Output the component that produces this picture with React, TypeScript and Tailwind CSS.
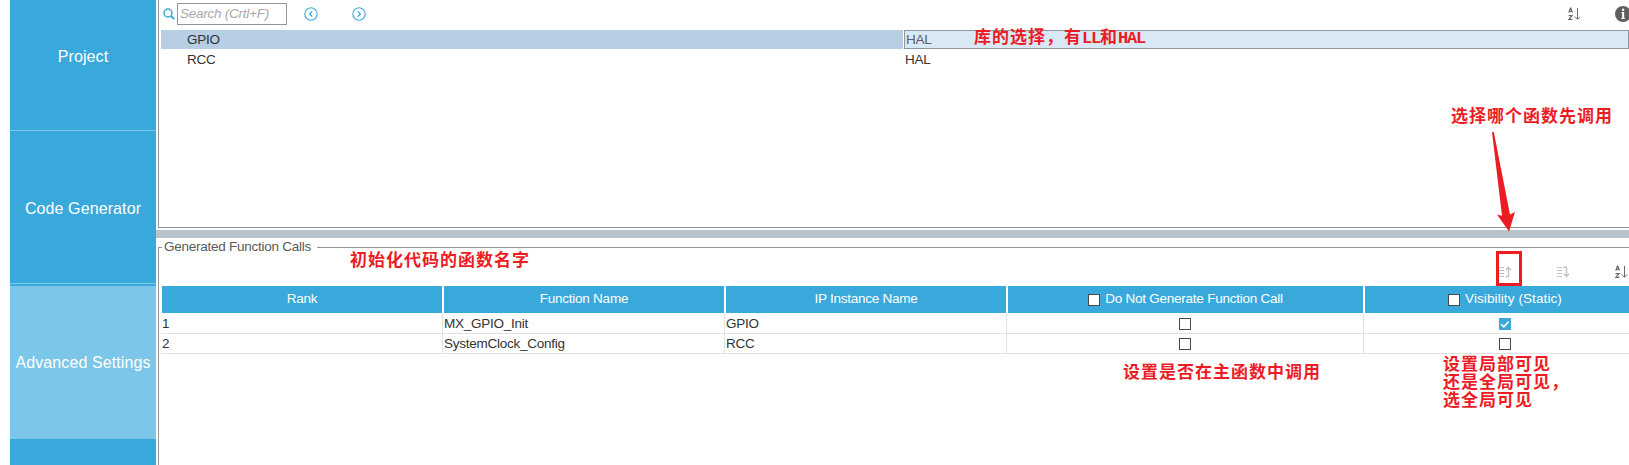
import React from "react";

const tabs = [
  { label: "Project", cls: "h-[131px] border-b border-[#7cc6ea] pb-[17px]" },
  { label: "Code Generator", cls: "h-[153px] border-b border-[#7cc6ea] pt-[4px]" },
  { label: "Advanced Settings", cls: "mt-[2px] h-[153px] bg-[#7cc6ea]" },
];

const headers = [
  { label: "Rank", check: false, cls: "" },
  { label: "Function Name", check: false, cls: "" },
  { label: "IP Instance Name", check: false, cls: "" },
  { label: "Do Not Generate Function Call", check: true, cls: "" },
  { label: "Visibility (Static)", check: true, cls: "tracking-[0.1px]" },
];

const calls = [
  { rank: "1", fn: "MX_GPIO_Init", ip: "GPIO", skip: false, isStatic: true },
  { rank: "2", fn: "SystemClock_Config", ip: "RCC", skip: false, isStatic: false },
];

const grid = "grid w-[1485px] grid-cols-[282px_282px_282px_357px_282px]";

function Box({ on = false }: { on?: boolean }) {
  return on ? (
    <svg width="12" height="12" viewBox="0 0 12 12" className="shrink-0">
      <rect width="12" height="12" fill="#39a9dc" />
      <path d="M2.2 6.2 4.8 8.8 9.8 3.4" fill="none" stroke="#fff" strokeWidth="1.5" />
    </svg>
  ) : (
    <span className="block h-3 w-3 shrink-0 border border-[#4a4a4a] bg-white" />
  );
}

function SortAZ() {
  return (
    <svg width="14" height="14" viewBox="0 0 14 14" fill="none" stroke="#6a6a6a" className="shrink-0">
      <path d="M.8 5.6 2.4 1.2h.4L4.4 5.6M1.3 4.3h2.6" strokeWidth="1.2" />
      <path d="M.6 8.6h3.5L.8 12.4h3.6" strokeWidth="1.2" />
      <path d="M9.5 1v11M6.8 9.6l2.7 2.7 2.7-2.7" strokeWidth="1" />
    </svg>
  );
}

function Move({ up = false }: { up?: boolean }) {
  return (
    <svg width="13" height="12" viewBox="0 0 13 12" fill="none" stroke="#c4c4c4" className="shrink-0">
      <path d="M0 1.5h5M0 4.5h5M0 7.5h5M0 10.5h5" strokeWidth="1.2" />
      {up ? (
        <path d="M6.5 10.5h3V1.5M7 4l2.5-2.7L12 4" strokeWidth="1.4" />
      ) : (
        <path d="M6.5 1.2h3v9M7 7.8l2.5 2.7L12 7.8" strokeWidth="1.4" />
      )}
    </svg>
  );
}

function Circle({ d }: { d: string }) {
  return (
    <svg width="14" height="14" viewBox="0 0 14 14" fill="none" stroke="#39a9dc" className="shrink-0">
      <circle cx="7" cy="7" r="6.2" strokeWidth="1.1" />
      <path d={d} strokeWidth="1.3" />
    </svg>
  );
}

function Note({ className, children }: { className: string; children: React.ReactNode }) {
  return (
    <div
      lang="zh-CN"
      className={
        "absolute whitespace-nowrap font-['Noto_Sans_CJK_SC',sans-serif] text-[17px] leading-[18px] font-semibold tracking-[1px] text-[#ed1c24] " +
        className
      }
    >
      {children}
    </div>
  );
}

const Latin = ({ children }: { children: string }) => (
  <span className="font-['Liberation_Mono',monospace] text-[17px] tracking-[-1.2px]">{children}</span>
);

export default function App() {
  return (
    <div className="relative flex h-[465px] w-full overflow-hidden bg-white pl-[10px] font-['Liberation_Sans',Arial,sans-serif] text-[13.5px] tracking-[-0.25px] text-[#333]">
      <nav className="flex w-[146px] shrink-0 flex-col bg-[#39a9dc] text-[16px] tracking-[0.1px] text-white">
        {tabs.map((t) => (
          <div key={t.label} className={"flex shrink-0 items-center justify-center whitespace-nowrap " + t.cls}>
            {t.label}
          </div>
        ))}
      </nav>

      <main className="flex min-w-0 flex-1 flex-col">
        <section className="ml-[2px] flex h-[228px] shrink-0 flex-col border-b border-l border-[#8f969b]">
          <div className="flex h-[30px] shrink-0 items-center pb-[2px]">
            <svg width="12" height="12" viewBox="0 0 12 12" fill="none" stroke="#39a9dc" className="ml-[4px] shrink-0">
              <circle cx="5" cy="5" r="4" strokeWidth="1.5" />
              <path d="m8 8 3.2 3.2" strokeWidth="1.9" />
            </svg>
            <div className="ml-[2px] flex h-[22px] w-[110px] shrink-0 items-center border border-[#8f969b] pl-[2px] whitespace-nowrap text-[#a9a9a9] italic">
              Search (Crtl+F)
            </div>
            <div className="ml-[17px] flex gap-[34px]">
              <Circle d="M8.2 4.4 5.6 7l2.6 2.6" />
              <Circle d="M5.8 4.4 8.4 7 5.8 9.6" />
            </div>
            <div className="-mr-[2px] ml-auto flex items-center gap-[33px]">
              <SortAZ />
              <svg width="16" height="16" viewBox="0 0 16 16" className="shrink-0">
                <circle cx="8" cy="8" r="8" fill="#5f5f5f" />
                <path d="M6.4 6.7h1.7v5.6M6.4 12.3h3.4" stroke="#fff" strokeWidth="1.3" fill="none" />
                <path d="M8.2 6v6.6" stroke="#fff" strokeWidth="1.9" />
                <circle cx="8.1" cy="3.7" r="1.2" fill="#fff" />
              </svg>
            </div>
          </div>
          <div className="ml-[2px] flex h-[19px] shrink-0 leading-[19px]">
            <div className="w-[742px] shrink-0 bg-[#b8cee5] pl-[26px]">GPIO</div>
            <div className="ml-px flex-1 border border-[#8f969b] bg-[#d8e8f5] pl-px leading-[17px] text-[#5a5f64]">HAL</div>
          </div>
          <div className="mt-px ml-[2px] flex h-[19px] shrink-0 leading-[19px]">
            <div className="w-[742px] shrink-0 pl-[26px]">RCC</div>
            <div className="pl-[2px]">HAL</div>
          </div>
        </section>

        <div className="mt-[2px] h-[8px] shrink-0 bg-[#b7c3ca]" />

        <section className="ml-[2px] flex flex-1 flex-col overflow-hidden">
          <div className="flex h-[18px] shrink-0 items-end">
            <span className="h-[9px] w-[4px] border-t border-l border-[#8f969b]" />
            <span className="w-[155px] pl-[2px] leading-[18px] whitespace-nowrap text-[#5a5a5a]">
              Generated Function Calls
            </span>
            <span className="h-[9px] flex-1 border-t border-[#8f969b]" />
          </div>
          <div className="flex flex-1 flex-col border-l border-[#8f969b]">
            <div className="flex h-[30px] shrink-0 items-center justify-end gap-[45px] pt-[2px]">
              <Move up />
              <Move />
              <SortAZ />
            </div>
            <div className={grid + " ml-[3px] h-[27px] shrink-0 text-white"}>
              {headers.map((h) => (
                <div
                  key={h.label}
                  className={
                    "mr-[2px] flex items-center justify-center gap-[5px] bg-[#39a9dc] whitespace-nowrap " + h.cls
                  }
                >
                  {h.check && <Box />}
                  {h.label}
                </div>
              ))}
            </div>
            <div className="flex flex-col pt-px">
              {calls.map((c) => (
                <div
                  key={c.rank}
                  className={grid + " ml-[2px] h-[20px] shrink-0 border-b border-[#e1e1e1] leading-[19px]"}
                >
                  <div className="border-r border-[#e1e1e1] pl-px">{c.rank}</div>
                  <div className="border-r border-[#e1e1e1] pl-px">{c.fn}</div>
                  <div className="border-r border-[#e1e1e1] pl-px">{c.ip}</div>
                  <div className="flex items-center justify-center border-r border-[#e1e1e1]">
                    <Box on={c.skip} />
                  </div>
                  <div className="flex items-center justify-center">
                    <Box on={c.isStatic} />
                  </div>
                </div>
              ))}
            </div>
          </div>
        </section>
      </main>

      <Note className="top-[27px] left-[974px]">
        库的选择，有<Latin>LL</Latin>和<Latin>HAL</Latin>
      </Note>
      <Note className="top-[250px] left-[350px]">初始化代码的函数名字</Note>
      <Note className="top-[106px] left-[1451px]">选择哪个函数先调用</Note>
      <Note className="top-[362px] left-[1123px]">设置是否在主函数中调用</Note>
      <Note className="top-[354px] left-[1443px]">
        设置局部可见
        <br />
        还是全局可见，
        <br />
        选全局可见
      </Note>
      <svg className="absolute top-[130px] left-[1490px]" width="30" height="104" viewBox="0 0 30 104">
        <path d="M2 2.2 3.8 2 20 84.5 25 82 19 101.5 7 84.5 12 85.8Z" fill="#ed1c24" />
      </svg>
      <div className="absolute top-[251px] left-[1496px] h-[35px] w-[26px] border-[3px] border-[#ed1c24]" />
    </div>
  );
}
